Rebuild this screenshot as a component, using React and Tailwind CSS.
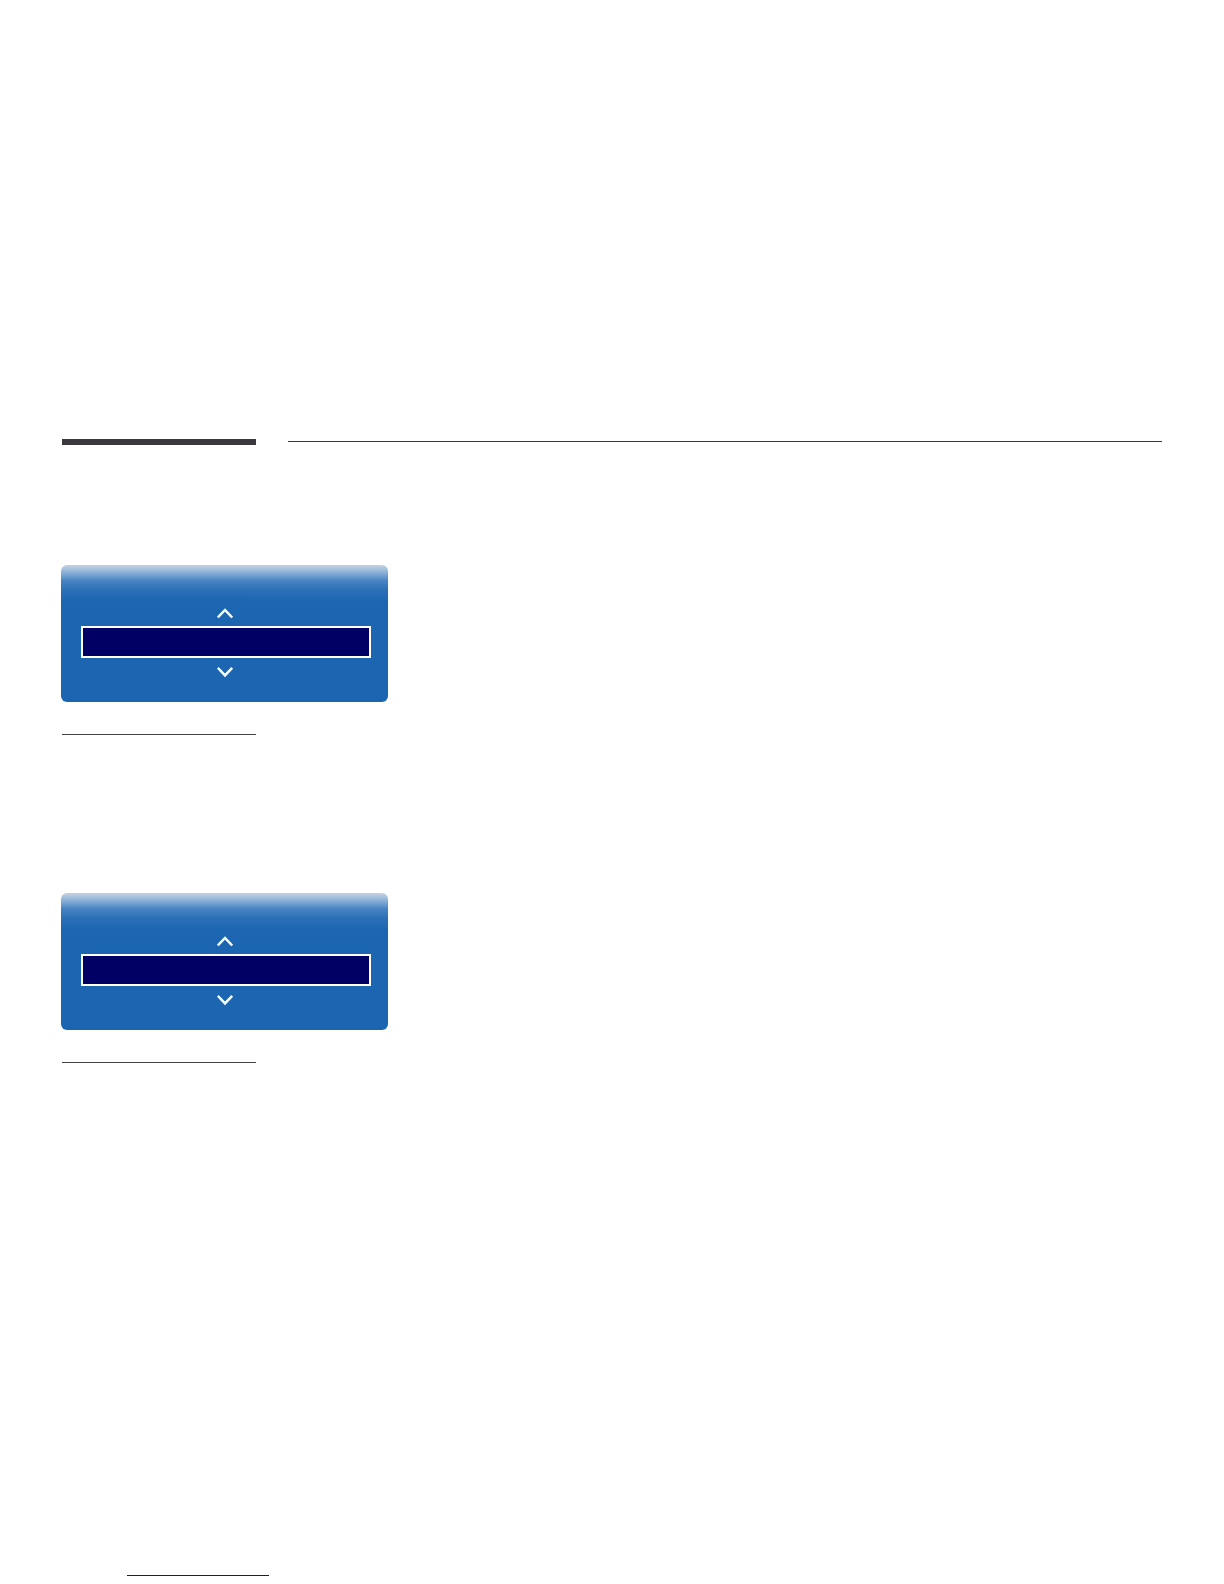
import React, { useState } from 'react';

const Chevron = ({ up }) => (
  <svg width="18" height="11" viewBox="0 0 18 11" fill="none" stroke="#f6ffff" strokeWidth="2.5">
    <path d={up ? 'M0.8 9.5 L8 2 L15.2 9.5' : 'M0.8 0.9 L8 8.4 L15.2 0.9'} />
  </svg>
);

const OsdPanel = ({ label }) => {
  const [value, setValue] = useState(0);

  return (
    <section
      aria-label={label}
      className="flex h-[137px] w-[327px] max-w-full flex-col items-center rounded-md bg-[linear-gradient(to_bottom,#c6d2e0_0px,#a8c2de_4px,#76a3d2_10px,#4584c2_16px,#2c70b7_25px,#1c66b1_36px)] pt-[43px] pr-[17px] pl-5"
    >
      <button type="button" aria-label="Previous" onClick={() => setValue(value - 1)}>
        <Chevron up />
      </button>
      <div className="mt-[7px] h-8 w-full border-2 border-white bg-[#000064]" />
      <button type="button" aria-label="Next" className="mt-[9px]" onClick={() => setValue(value + 1)}>
        <Chevron />
      </button>
    </section>
  );
};

const App = () => {
  return (
    <div className="min-h-screen bg-white pt-[439px] font-['Liberation_Sans',sans-serif]">
      {/* Heading rules */}
      <header className="flex pr-[62px] pl-[62px]">
        <div className="h-[6px] w-[194px] bg-[#3b393e]" />
        <div className="mt-[2px] ml-8 h-px flex-1 bg-[#3b393e]" />
      </header>

      <main className="mt-[120px] flex flex-col gap-[158px] px-[61px]">
        {['First setting', 'Second setting'].map(label => (
          <div key={label}>
            <OsdPanel label={label} />
            <hr className="mt-8 ml-px h-px w-[194px] border-0 bg-[#444444]" />
          </div>
        ))}
      </main>

      {/* Underlined link at the foot of the page */}
      <footer className="mt-[503px] pb-[8px] pl-[127px]">
        <a href="#top" aria-label="Back to top" className="block h-[10px] w-[142px] border-b border-[#10109a]" />
      </footer>
    </div>
  );
};

export default App;
